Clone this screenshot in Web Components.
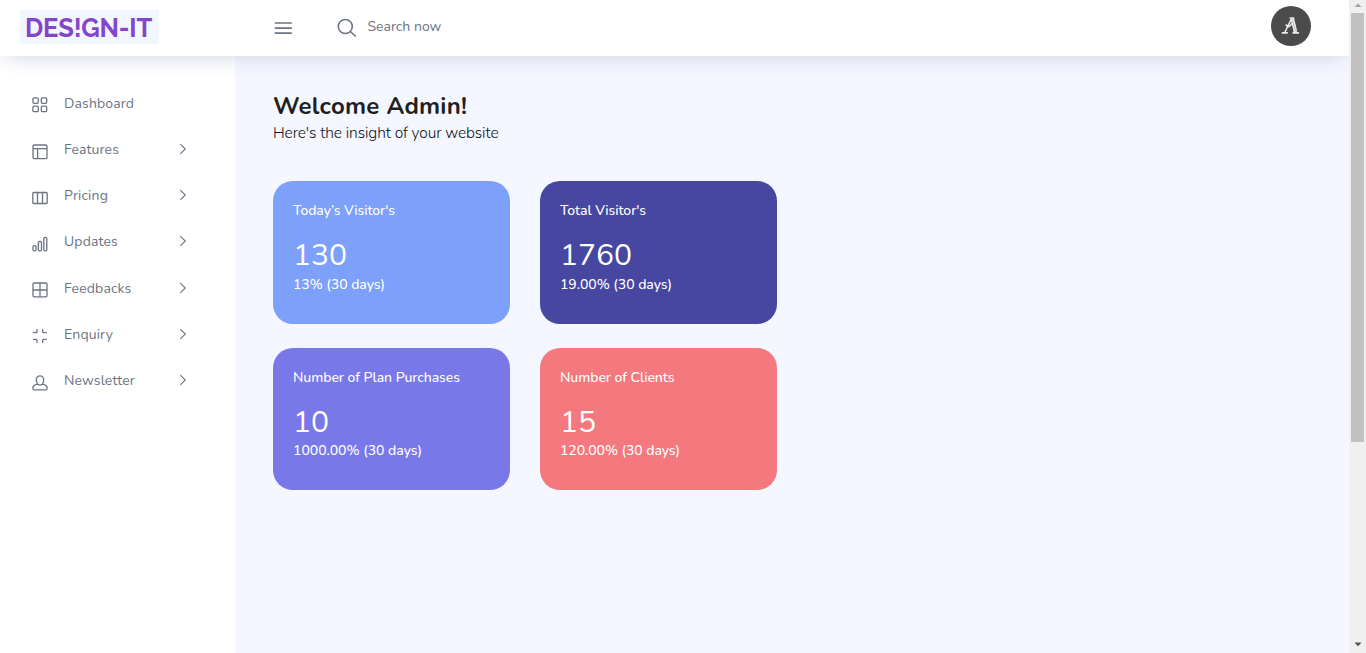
<!DOCTYPE html>
<html lang="en">
<head>
<meta charset="utf-8">
<title>Admin</title>
<style>
html,body{margin:0;height:100%;overflow:hidden;background:#fff}
body{font-family:Nunito,Lato,"Open Sans",sans-serif;color:#1f1f1f}
</style>
</head>
<body>
<admin-app></admin-app>
<script>
const define = (name, html, init) => customElements.define(name, class extends HTMLElement {
  connectedCallback() {
    if (this.shadowRoot) return;
    const t = document.createElement('template');
    t.innerHTML = typeof html === 'function' ? html(this) : html;
    this.attachShadow({mode: 'open'}).append(t.content.cloneNode(true));
    if (init) init(this);
  }
});

/* A single line of text tracked out to a set width. */
define('fit-text', '<style>:host{display:inline-block;white-space:pre}span{display:inline-block}</style><span><slot></slot></span>', el => {
  const span = el.shadowRoot.querySelector('span');
  const natural = span.getBoundingClientRect().width;
  span.style.letterSpacing = ((el.getAttribute('w') - natural) / el.textContent.length).toFixed(4) + 'px';
});

const icons = {
  dashboard: '<rect x=".9" y=".9" width="5.4" height="5.4" rx="1.2"/><rect x="9.3" y=".9" width="5.4" height="5.4" rx="1.2"/><rect x=".9" y="9.2" width="5.4" height="5.4" rx="1.2"/><rect x="9.3" y="9.2" width="5.4" height="5.4" rx="1.2"/>',
  layout: '<rect x="1" y="1" width="14" height="13.6" rx="1.3"/><path d="M1 4.7h14M5.6 4.7v9.9"/>',
  columns: '<rect x=".8" y="2.5" width="14.4" height="11" rx="1"/><path d="M5.5 2.5v11M10.5 2.5v11"/>',
  bars: '<rect x="1" y="9.6" width="3" height="5.2" rx="1.2"/><rect x="6.3" y="5.5" width="3.2" height="9.3" rx="1.2"/><rect x="11.8" y="1.4" width="3" height="13.4" rx="1.2"/>',
  grid: '<rect x="1" y="1" width="14" height="13.8" rx="1.3"/><path d="M8 1v13.8M1 8h14"/>',
  contract: '<path d="M5 1v2.7q0 .9-.9.9H1M10.7 1v2.7q0 .9.9.9h3.1M1 11.3h3.1q.9 0 .9.9V15M14.7 11.3h-3.1q-.9 0-.9.9V15"/>',
  head: '<path d="M5.6 9.2C4.7 8 4.3 6.8 4.3 5c0-2.6 1.5-4.1 3.7-4.1S11.7 2.4 11.7 5c0 1.8-.4 3-1.3 4.2M5.6 9.2c-2.7.5-4.8 1.6-4.8 3.8 0 1.2.6 1.8 1.6 1.8h11.2c1 0 1.6-.6 1.6-1.8 0-2.2-2.1-3.3-4.8-3.8M5.6 9.2q2.4 1.5 4.8 0"/>'
};
define('line-icon', el => `<style>:host{display:block;width:16px;height:16px}svg{display:block;fill:none;stroke:#6c7383;stroke-width:1.3}</style>
<svg width="16" height="16" viewBox="0 0 16 16">${icons[el.getAttribute('name')]}</svg>`);

define('nav-item', el => `<style>
:host{display:flex;height:46.2px;align-items:center;padding:0 48px 0 32px;box-sizing:border-box;color:#6c7383;font-size:14px;line-height:18px}
line-icon{margin:3.4px 16px 0 0}.l{flex:1}svg{display:block;fill:none;stroke:#6c7383;stroke-width:1.1;margin-bottom:1.8px}</style>
<line-icon name="${el.getAttribute('icon')}"></line-icon><span class="l"><slot></slot></span>
${el.hasAttribute('leaf') ? '' : '<svg width="8" height="12" viewBox="0 0 8 12"><path d="M1.3 1.1 6.3 6l-5 4.9"/></svg>'}`);

define('side-nav', `<style>:host{display:block;width:235px;background:#fff;padding-top:24.65px;box-sizing:border-box;flex:none}.nudge{padding-top:1px}</style>
<nav>
<nav-item icon="dashboard" leaf><fit-text w="70">Dashboard</fit-text></nav-item>
<nav-item icon="layout"><fit-text w="55">Features</fit-text></nav-item>
<nav-item icon="columns"><fit-text w="44">Pricing</fit-text></nav-item>
<nav-item icon="bars"><fit-text w="54">Updates</fit-text></nav-item>
<nav-item icon="grid"><fit-text class="nudge" w="67.5">Feedbacks</fit-text></nav-item>
<nav-item icon="contract"><fit-text w="49">Enquiry</fit-text></nav-item>
<nav-item icon="head"><fit-text w="71">Newsletter</fit-text></nav-item>
</nav>`);

define('brand-logo', `<style>:host{display:flex;width:139px;height:34px;background:#f2f6fe;align-items:center;padding:2px 0 0 5px;box-sizing:border-box;color:#8445cb;font:700 25.5px/32px Raleway,Lato,sans-serif}</style>
<fit-text w="127">DES!GN-IT</fit-text>`);

define('user-avatar', `<style>:host{display:flex;width:40px;height:40px;border-radius:50%;background:#4b4b4b}svg{display:block}</style>
<svg width="40" height="40" viewBox="0 0 40 40" fill="none" stroke="#ececec">
<path d="M21.3 12.5 24.5 26" stroke-width="3.6"/><path d="M20.3 13 14 26M14.8 18.5q2.5 4 4.8.6t5 1.3" stroke-width="1.6"/><path d="M18.5 12h4.7M10.8 26.8h6M21.5 26.8h6.5" stroke-width="1.7"/><path d="m21.500 14 2.800 11" stroke="#aaa" stroke-width=".7"/></svg>`);

define('top-bar', `<style>
:host{display:flex;height:56px;background:#fff;box-shadow:0 5px 21px -5px #cdd1e1;align-items:flex-start;padding:0 38px 0 20px;box-sizing:border-box;position:relative;z-index:1;flex:none;color:#6c7383}
brand-logo{margin-top:10px}svg{display:block;fill:none;stroke:#6c7383}
.menu{margin:22px 0 0 115px}.find{margin:18px 0 0 45px}.q{font-size:14px;line-height:18px;margin:18px 0 0 10.4px;flex:1}
user-avatar{margin-top:6px}</style>
<brand-logo></brand-logo>
<svg class="menu" width="18" height="13" viewBox="0 0 18 13" stroke-width="1.7"><path d="M.8 1h17M.8 6.1h17M.8 11.1h17"/></svg>
<svg class="find" width="20" height="20" viewBox="0 0 20 20" stroke-width="1.6"><circle cx="8.3" cy="8.5" r="7"/><path d="m13.3 13.5 5.5 5"/></svg>
<span class="q"><fit-text w="74">Search now</fit-text></span>
<user-avatar></user-avatar>`);

define('stat-card', `<style>
:host{display:block;height:142.5px;border-radius:20px;padding:20px;box-sizing:border-box;color:#fff;font-size:14px;line-height:20px;font-weight:500}
.n{font-size:30px;line-height:36px;margin-top:17px;font-weight:400}.d{margin-top:.5px}</style>
<div><slot name="title"></slot></div><div class="n"><slot name="value"></slot></div><div class="d"><slot></slot></div>`);

define('welcome-head', `<style>:host{display:block}
h1{margin:0;font-size:24px;line-height:28px;font-weight:700;color:#1f1f1f}p{margin:3px 0 0;font-size:15.5px;line-height:20px;font-weight:300;color:#101018}</style>
<h1><fit-text w="194.3">Welcome Admin!</fit-text></h1><p><fit-text w="225.5">Here's the insight of your website</fit-text></p>`);

define('stat-board', `<style>:host{display:block;flex:1;background:#f4f7ff;padding:36px 38px}
.g{display:grid;grid-template-columns:237px 237px;column-gap:30px;row-gap:24.2px;margin-top:38px}</style>
<welcome-head></welcome-head>
<div class="g">
<stat-card style="background:#7da0fa"><fit-text slot="title" w="102">Today’s Visitor's</fit-text><fit-text slot="value" w="54">130</fit-text><fit-text w="92">13% (30 days)</fit-text></stat-card>
<stat-card style="background:#4747a1"><fit-text slot="title" w="86">Total Visitor's</fit-text><fit-text slot="value" w="72">1760</fit-text><fit-text w="112">19.00% (30 days)</fit-text></stat-card>
<stat-card style="background:#7978e9"><fit-text slot="title" w="167">Number of Plan Purchases</fit-text><fit-text slot="value" w="36">10</fit-text><fit-text w="129">1000.00% (30 days)</fit-text></stat-card>
<stat-card style="background:#f3797e"><fit-text slot="title" w="114.5">Number of Clients</fit-text><fit-text slot="value" w="36">15</fit-text><fit-text w="120">120.00% (30 days)</fit-text></stat-card>
</div>`);

define('scroll-rail', `<style>:host{display:flex;flex-direction:column;width:17px;height:653px;background:#f0f0f0;align-items:center;flex:none;position:relative;z-index:2}
svg{display:block}.t{width:13px;height:429px;margin-top:5px;background:#c1c1c1}.d{margin-top:auto;margin-bottom:6px}.u{margin-top:3px}</style>
<svg class="u" width="8" height="5" viewBox="0 0 8 5"><path fill="#a3a3a3" d="M.5 4h7L4 .5z"/></svg><div class="t"></div>
<svg class="d" width="8" height="5" viewBox="0 0 8 5"><path fill="#505050" d="M.5 .5h7L4 4.2z"/></svg>`);

define('admin-app', `<style>:host{display:flex;height:653px;overflow:hidden}.page{flex:1;display:flex;flex-direction:column;overflow:hidden}.body{flex:1;display:flex}</style>
<div class="page"><top-bar></top-bar><div class="body"><side-nav></side-nav><stat-board></stat-board></div></div><scroll-rail></scroll-rail>`);
</script>
</body>
</html>
